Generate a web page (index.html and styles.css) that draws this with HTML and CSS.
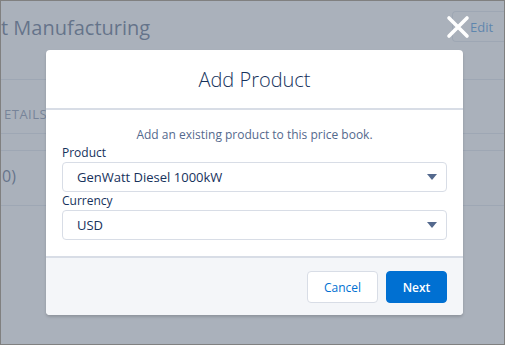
FILE: index.html
```html
<!DOCTYPE html>
<html lang="en">
<head>
    <meta charset="UTF-8">
    <meta name="viewport" content="width=device-width, initial-scale=1.0">
    <title>Add Product</title>
    <link rel="stylesheet" href="styles.css">
</head>
<body>
    <div class="record">
        <div class="record-header">
            <h1 class="record-title">t Manufacturing</h1>
            <span class="edit-btn">Edit</span>
        </div>
        <div class="record-tabs">
            <span class="tab">ETAILS</span>
        </div>
        <div class="record-spacer"></div>
        <div class="record-row">
            <span class="count">0)</span>
        </div>
    </div>

    <div class="backdrop">
        <div class="modal">
            <span class="close">
                <svg width="24" height="24" viewBox="0 0 24 24"><path d="M3 3 L21 21 M21 3 L3 21" stroke="#fff" stroke-width="3.6" stroke-linecap="round"/></svg>
            </span>
            <div class="modal-header">
                <h2>Add Product</h2>
            </div>
            <div class="modal-body">
                <p class="intro">Add an existing product to this price book.</p>
                <label class="field-label">Product</label>
                <div class="select">
                    <span>GenWatt Diesel 1000kW</span>
                    <span class="caret"></span>
                </div>
                <label class="field-label">Currency</label>
                <div class="select">
                    <span>USD</span>
                    <span class="caret"></span>
                </div>
            </div>
            <div class="modal-footer">
                <span class="btn btn-neutral">Cancel</span>
                <span class="btn btn-brand">Next</span>
            </div>
        </div>
    </div>
</body>
</html>
```

FILE: styles.css
```css
html, body { margin: 0; padding: 0; }
body { font-family: "Open Sans", "Noto Sans", sans-serif; width: 505px; height: 345px; box-sizing: border-box; border: 1px solid #808080; background: #fff; position: relative; overflow: hidden; color: #16325c; }

/* record page under the backdrop */
.record-header { height: 78px; border-bottom: 1px solid #d8dde6; display: flex; justify-content: space-between; align-items: flex-start; }
.record-title { margin: 13px 0 0 0; font-size: 20px; font-weight: 400; color: #16325c; }
.edit-btn { margin-top: 10px; width: 52px; height: 31px; box-sizing: border-box; border: 1px solid #d8dde6; border-right: none; border-radius: 4px 0 0 4px; font-size: 13px; color: #0070d2; display: flex; align-items: center; padding-left: 17px; }
.record-tabs { height: 53px; border-bottom: 1px solid #d8dde6; }
.tab { display: inline-block; margin: 25px 0 0 3px; font-size: 13px; letter-spacing: 0.5px; color: #54698d; }
.record-spacer { height: 16px; border-bottom: 1px solid #d8dde6; }
.record-row { height: 54px; border-bottom: 1px solid #d8dde6; }
.count { display: inline-block; margin: 14px 0 0 1px; font-size: 16px; color: #16325c; }

/* modal */
.backdrop { position: absolute; inset: 0; background: rgba(134, 144, 158, 0.7); padding: 49px 0 0 45px; }
.modal { position: relative; width: 417px; background: #fff; border-radius: 4px; box-shadow: 0 2px 3px rgba(0, 0, 0, 0.16); }
.close { position: absolute; top: -35px; right: -7px; width: 24px; height: 24px; }
.close svg { display: block; }
.modal-header { height: 58px; border-bottom: 2px solid #d8dde6; display: flex; align-items: center; justify-content: center; }
.modal-header h2 { margin: 0; font-size: 20px; font-weight: 300; color: #16325c; }
.modal-body { padding: 16px; }
.intro { margin: 0; text-align: center; font-size: 12px; line-height: 18px; color: #54698d; }
.field-label { display: block; font-size: 12px; line-height: 18px; color: #16325c; }
.select { height: 30px; box-sizing: border-box; border: 1px solid #d8dde6; border-radius: 4px; display: flex; align-items: center; justify-content: space-between; padding: 0 9px 0 14px; font-size: 13px; color: #16325c; }
.caret { width: 0; height: 0; border-left: 5px solid transparent; border-right: 5px solid transparent; border-top: 6px solid #54698d; }
.modal-footer { border-top: 2px solid #d8dde6; background: #f4f6f9; border-radius: 0 0 4px 4px; padding: 13px 16px 12px; display: flex; justify-content: flex-end; gap: 8px; }
.btn { height: 32px; box-sizing: border-box; border-radius: 4px; display: flex; align-items: center; justify-content: center; font-size: 12px; }
.btn-neutral { width: 71px; background: #fff; border: 1px solid #d8dde6; color: #0070d2; }
.btn-brand { width: 61px; background: #0070d2; border: 1px solid #0070d2; color: #fff; font-weight: 600; }
```
